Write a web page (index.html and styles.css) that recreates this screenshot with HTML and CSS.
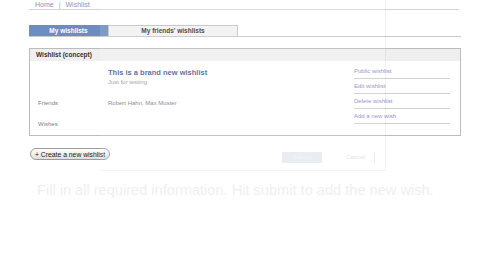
FILE: index.html
```html
<!DOCTYPE html>
<html lang="en">
<head>
    <meta charset="UTF-8">
    <meta name="viewport" content="width=device-width, initial-scale=1.0">
    <title>Wishlist</title>
    <link rel="stylesheet" href="styles.css">
</head>
<body>
    <div class="page">
        <div class="crumbs">
            <a href="#">Home</a><span class="sep">|</span><a href="#">Wishlist</a>
        </div>
        <div class="tabs">
            <div class="tab active">My wishlists</div>
            <div class="tab">My friends' wishlists</div>
        </div>
        <div class="panel">
            <div class="panel-head">Wishlist (concept)</div>
            <div class="panel-body">
                <div class="details">
                    <div class="row row-title">
                        <div class="label"></div>
                        <div class="value">
                            <div class="wl-title">This is a brand new wishlist</div>
                            <div class="wl-sub">Just for testing</div>
                        </div>
                    </div>
                    <div class="row row-friends">
                        <div class="label">Friends</div>
                        <div class="value">Robert Hahn, Max Muster</div>
                    </div>
                    <div class="row row-wishes">
                        <div class="label">Wishes</div>
                        <div class="value"></div>
                    </div>
                </div>
                <ul class="actions">
                    <li><a href="#">Public wishlist</a></li>
                    <li><a href="#">Edit wishlist</a></li>
                    <li><a href="#">Delete wishlist</a></li>
                    <li><a href="#">Add a new wish</a></li>
                </ul>
            </div>
        </div>
        <button class="create-btn">+ Create a new wishlist</button>
    </div>

    <!-- fading dialog -->
    <div class="ghost">
        <div class="ghost-buttons">
            <span class="ghost-submit">Submit</span>
            <span class="ghost-cancel">Cancel</span>
        </div>
    </div>
    <p class="ghost-hint">Fill in all required information. Hit submit to add the new wish.</p>
</body>
</html>
```

FILE: styles.css
```css
body {
    margin: 0;
    padding: 0;
    background-color: #ffffff;
    font-family: "Liberation Sans", Arial, sans-serif;
    color: #333;
    position: relative;
    width: 480px;
    height: 270px;
    overflow: hidden;
}
a {
    text-decoration: none;
}
.page {
    margin-left: 29px;
    width: 432px;
}
.crumbs {
    font-size: 7px;
    line-height: 9px;
    padding-left: 6px;
    border-bottom: 1px solid #d4d4d4;
    margin-right: 2px;
}
.crumbs a {
    color: #8a93bd;
}
.crumbs .sep {
    color: #aaa;
    margin: 0 5px;
}
.tabs {
    display: flex;
    margin-top: 15px;
    border-bottom: 1px solid #c8c8c8;
}
.tab {
    width: 128px;
    height: 10px;
    line-height: 10px;
    font-size: 6.5px;
    font-weight: bold;
    text-align: center;
    color: #333;
    background-color: #f2f2f2;
    border: 1px solid #c2c2c2;
    border-bottom: none;
}
.tab.active {
    width: 77px;
    color: #fff;
    background-color: #6f8cc0;
    border-color: #6f8cc0;
}
.panel {
    margin-top: 11px;
    border: 1px solid #bcbcbc;
    height: 86px;
}
.panel-head {
    height: 12px;
    line-height: 12px;
    padding-left: 6px;
    font-size: 6.5px;
    font-weight: bold;
    color: #333;
    background-color: #efefef;
}
.panel-body {
    display: flex;
    justify-content: space-between;
}
.details {
    flex: 1;
}
.row {
    display: flex;
    font-size: 6px;
    color: #808080;
}
.label {
    width: 70px;
    padding-left: 8px;
    flex-shrink: 0;
}
.row-title {
    margin-top: 7px;
}
.wl-title {
    font-size: 7.5px;
    font-weight: bold;
    color: #4b5e9d;
    line-height: 9px;
}
.wl-sub {
    font-size: 6px;
    color: #999;
    line-height: 10px;
}
.row-friends {
    margin-top: 13px;
}
.row-wishes {
    margin-top: 15px;
}
.actions {
    list-style: none;
    margin: 4px 10px 0 0;
    padding: 0;
    width: 96px;
}
.actions li {
    font-size: 6px;
    line-height: 13px;
    border-bottom: 1px solid #cfcfcf;
    margin-bottom: 1px;
}
.actions a {
    color: #878dcc;
}
.create-btn {
    margin-top: 12px;
    margin-left: 1px;
    height: 12px;
    padding: 0 4px;
    font-family: "Liberation Sans", Arial, sans-serif;
    font-size: 6.8px;
    color: #222;
    background: linear-gradient(#ffffff, #dedede);
    border: 1px solid #9a9a9a;
    border-radius: 6px;
}
.ghost {
    position: absolute;
    left: 100px;
    top: 0;
    width: 285px;
    height: 170px;
    background-color: rgba(255, 255, 255, 0.12);
    border-right: 1px solid rgba(0, 0, 0, 0.05);
    border-bottom: 1px solid rgba(0, 0, 0, 0.04);
}
.ghost-buttons {
    position: absolute;
    right: 10px;
    bottom: 7px;
    display: flex;
    gap: 15px;
    font-size: 6px;
}
.ghost-submit {
    width: 40px;
    height: 11px;
    line-height: 11px;
    text-align: center;
    color: #f4f6f8;
    background-color: #e9edf1;
}
.ghost-cancel {
    width: 37px;
    height: 11px;
    line-height: 11px;
    text-align: center;
    color: #e6e6e6;
    border-right: 1px solid #ececec;
}
.ghost-hint {
    position: absolute;
    left: 37px;
    top: 182px;
    margin: 0;
    font-size: 14.6px;
    color: #efefef;
    white-space: nowrap;
}
```
